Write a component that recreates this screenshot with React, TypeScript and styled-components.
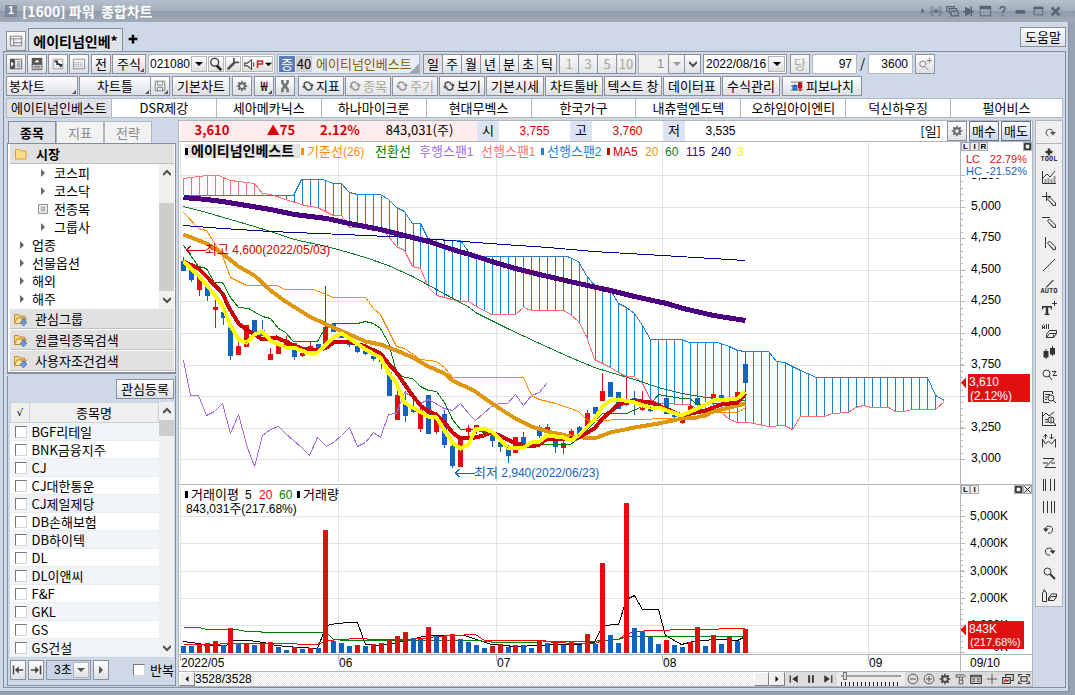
import React from "react";
import styled, { createGlobalStyle, css } from "styled-components";

const NUM_FONT = `12px/16px "Liberation Sans", "Noto Sans CJK KR", sans-serif`;

const GlobalStyle = createGlobalStyle`
  * { box-sizing: border-box; }
  body { margin: 0; background: #97a3b5; }
  body, button, input, select, table {
    font-family: "Noto Sans CJK KR", sans-serif;
    font-size: 13px;
    line-height: 18px;
    color: #000;
  }
  button, input, select { margin: 0; padding: 0; }
  svg { display: block; flex: none; }
  svg text { font: ${NUM_FONT}; }
  svg tspan { font-family: "Noto Sans CJK KR", sans-serif; font-size: 13px; }
`;

/* ---------- icons ---------- */

type IconProps = { d?: string; fill?: string; w?: number; color?: string; sw?: number; children?: React.ReactNode };

const Icon = ({ d, fill, w = 16, color = "#333", sw = 1, children }: IconProps) => (
  <svg width={w} height={w} viewBox="0 0 16 16" fill="none" stroke={color} strokeWidth={sw} aria-hidden="true">
    {d && <path d={d} />}
    {fill && <path d={fill} fill={color} stroke="none" />}
    {children}
  </svg>
);

const GEAR =
  "M7 1h2v2l1.500.6L12 2.200l1.800 1.800-1.400 1.500L13 7h2v2h-2l-.6 1.500 1.400 1.500-1.800 1.800-1.500-1.400L9 13v2H7v-2l-1.500-.6L4 13.800 2.200 12l1.400-1.500L3 9H1V7h2l.6-1.500L2.200 4 4 2.200l1.500 1.400L7 3zM8 5.500a2.500 2.500 0 1 0 0 5 2.500 2.500 0 0 0 0-5z";
const Gear = ({ color = "#666", w = 14 }: { color?: string; w?: number }) => (
  <svg width={w} height={w} viewBox="0 0 16 16" aria-hidden="true">
    <path d={GEAR} fill={color} fillRule="evenodd" />
  </svg>
);

const Refresh = ({ color }: { color: string }) => (
  <Icon w={12} color={color} sw={2} d="M3 9V7.500a4 4 0 0 1 8-1.500M13 7v1.500a4 4 0 0 1-8 1.500" fill="M0 8h6L3 12zM10 8h6L13 4z" />
);

const Arrow = ({ dir = "down", color = "#000", size = 8 }: { dir?: string; color?: string; size?: number }) => {
  const shapes: Record<string, string> = {
    down: "M0 2h8L4 6z",
    right: "M2 0v8l4-4z",
    left: "M6 0v8L2 4z",
  };
  return (
    <svg width={size} height={size} viewBox="0 0 8 8" aria-hidden="true">
      <path d={shapes[dir]} fill={color} />
    </svg>
  );
};

const Chevron = ({ up }: { up?: boolean }) => (
  <svg width="8" height="8" viewBox="0 0 8 8" fill="none" stroke="#505050" strokeWidth="2" aria-hidden="true">
    <path d={up ? "M0 6l4-4 4 4" : "M0 2l4 4 4-4"} />
  </svg>
);

const Folder = ({ open }: { open?: boolean }) => (
  <svg width="14" height="14" viewBox="0 0 14 14" aria-hidden="true">
    {open ? (
      <>
        <path d="M.5 11.500V2.500h4l1 1.500h5v2h-7z" fill="#fbd980" stroke="#c98f2e" />
        <path d="M.5 11.500l2.500-5.500h9.500l-2.500 5.500z" fill="#ffe7a3" stroke="#c98f2e" />
        <path d="M8 7h3v3h2l-3.500 4L6 10h2z" fill="#6b9be0" stroke="#3f6fb5" strokeWidth=".7" />
      </>
    ) : (
      <path d="M1.500 12V2.500h4l1 1.500H12V12z" fill="#ffdc86" stroke="#d9a23c" />
    )}
  </svg>
);

/* ---------- frame ---------- */

const Frame = styled.div`
  min-height: 100vh;
  background: #97a3b5;
  padding: 0 6px 4px 0;
  display: flex;
  flex-direction: column;
`;

const TitleBar = styled.header`
  height: 22px;
  margin-right: -6px;
  padding: 0 12px 0 5px;
  display: flex;
  align-items: center;
  gap: 5px;
  background: linear-gradient(#b6c1cd 0, #a0acba 11px, #8e9aab 11px, #a2aab7 22px);
`;

const WindowNumber = styled.span`
  width: 12px;
  height: 12px;
  background: #7d8898;
  color: #fff;
  font: bold 10px/12px "Liberation Sans", sans-serif;
  text-align: center;
`;

const Title = styled.h1`
  margin: 0;
  flex: 1;
  color: #fff;
  font-size: 14px;
  line-height: 20px;
  font-weight: 700;
  white-space: pre;
`;

const WindowTools = styled.div`
  display: flex;
  align-items: center;
  gap: 4px;
`;

const PlainButton = styled.button`
  border: 0;
  background: none;
  display: flex;
  align-items: center;
  justify-content: center;
`;

const Body = styled.main`
  flex: 1;
  background: #ced8e7;
  border-right: 1px solid #848fa0;
  border-bottom: 1px solid #848fa0;
  display: flex;
  flex-direction: column;
  padding: 0 2px 3px 3px;
`;

const TabStrip = styled.div`
  height: 29px;
  display: flex;
  align-items: flex-end;
  padding-left: 3px;
  gap: 2px;
`;

const DocTab = styled.button`
  height: 24px;
  width: 95px;
  margin-bottom: -1px;
  border: 1px solid #848f9e;
  border-bottom: 0;
  background: #e0e3e9;
  font-size: 14px;
  font-weight: 700;
  white-space: nowrap;
`;

const AddTab = styled(PlainButton)`
  width: 16px;
  height: 24px;
`;

const Spacer = styled.div`
  flex: 1;
`;

const HelpSlot = styled.div`
  align-self: flex-start;
  padding-top: 5px;
`;

const Panel = styled.div`
  flex: 1;
  border: 1px solid #848f9e;
  padding: 2px 2px 0 2px;
  display: flex;
  flex-direction: column;
  gap: 2px;
`;

/* ---------- toolbars ---------- */

const Bar = styled.div`
  display: flex;
  height: 20px;
  gap: 1px;
`;

const Gap = styled.span<{ $w?: number }>`
  width: ${(p) => p.$w ?? 0}px;
`;

const Btn = styled.button<{ $w: number; $left?: boolean; $corner?: boolean; $blue?: boolean; $on?: boolean }>`
  position: relative;
  width: ${(p) => p.$w}px;
  height: 20px;
  flex: none;
  border: 1px solid ${(p) => (p.$blue ? "#5f7396" : "#8b929c")};
  background: ${(p) =>
    p.$on ? "#e0e2e8" : p.$blue ? "linear-gradient(#fff, #c9d6ee)" : "linear-gradient(#fff, #dcdfe5)"};
  display: flex;
  align-items: center;
  justify-content: ${(p) => (p.$left ? "flex-start" : "center")};
  padding-left: ${(p) => (p.$left ? 2 : 0)}px;
  gap: 2px;
  line-height: 16px;
  white-space: nowrap;
  &:disabled {
    color: #a9a796;
    background: linear-gradient(#f8f8f8, #e2e4e8);
  }
  ${(p) =>
    p.$corner &&
    css`
      &::after {
        content: "";
        position: absolute;
        right: 1px;
        bottom: 1px;
        border: 2px solid transparent;
        border-right-color: #555;
        border-bottom-color: #555;
      }
    `}
`;

const Joined = styled.div`
  display: flex;
  margin-right: 1px;
  > * + * {
    margin-left: -1px;
  }
`;

const CodeBox = styled.div`
  width: 127px;
  display: flex;
  align-items: center;
  gap: 1px;
  padding: 0 1px;
  background: #fff;
  border: 1px solid #b4bac2;
`;

const CodeInput = styled.input`
  flex: 1;
  min-width: 0;
  border: 0;
  font: ${NUM_FONT};
  text-align: center;
  height: 16px;
`;

const MiniBtn = styled.button<{ $w?: number }>`
  width: ${(p) => p.$w ?? 16}px;
  height: 16px;
  flex: none;
  display: flex;
  align-items: center;
  justify-content: center;
  gap: 1px;
  border: 1px solid #b4b6ba;
  background: linear-gradient(#fff, #dedfe2);
`;

const NameBox = styled.div`
  width: 143px;
  display: flex;
  align-items: center;
  gap: 1px;
  padding-left: 1px;
  border: 1px solid #a9b2be;
  background: linear-gradient(135deg, transparent 50%, #9ea4ad 50%) right bottom / 9px 9px no-repeat, #e6edf6;
  color: #8a5a0c;
  white-space: nowrap;
`;

const Mark = styled.span<{ $bg: string; $color: string }>`
  width: 16px;
  height: 16px;
  line-height: 15px;
  flex: none;
  text-align: center;
  background: ${(p) => p.$bg};
  color: ${(p) => p.$color};
`;

const NameText = styled.span`
  padding-left: 3px;
`;

const NumInput = styled.input<{ $w: number; $muted?: boolean }>`
  width: ${(p) => p.$w}px;
  height: 20px;
  border: 1px solid #b4b8be;
  padding-right: 4px;
  font: ${NUM_FONT};
  text-align: right;
  background: ${(p) => (p.$muted ? "#efefef" : "#fff")};
  color: ${(p) => (p.$muted ? "#888" : "#000")};
`;

const SelectBox = styled.span<{ $w: number; $bg?: string; $pad?: number }>`
  width: ${(p) => p.$w}px;
  height: 20px;
  display: flex;
  align-items: center;
  border: 1px solid #9096a0;
  background: ${(p) => p.$bg ?? "#fff"};
  padding-right: 1px;
  select {
    flex: 1;
    min-width: 0;
    height: 16px;
    font: ${NUM_FONT};
    appearance: none;
    border: 0;
    background: none;
    padding-left: ${(p) => p.$pad ?? 2}px;
  }
`;

const Slash = styled.span`
  width: 9px;
  text-align: center;
`;

const StockTabs = styled.nav`
  height: 20px;
  display: grid;
  grid-template-columns: repeat(9, 105fr) 111fr;
  border: 1px solid #b3b9c2;
  background: #fff;
`;

const StockTab = styled.button<{ $on?: boolean }>`
  border: 0;
  border-right: 1px solid #b3b9c2;
  background: ${(p) => (p.$on ? "#e0e2e8" : "#fff")};
  line-height: 16px;
  white-space: nowrap;
  &:last-child {
    border-right: 0;
  }
`;

/* ---------- side panel ---------- */

const Content = styled.div`
  flex: 1;
  display: flex;
  gap: 2px;
`;

const Side = styled.aside`
  width: 170px;
  flex: none;
  display: flex;
  flex-direction: column;
  padding-top: 1px;
`;

const SideTabs = styled.div`
  display: flex;
  padding-left: 2px;
  height: 22px;
`;

const SideTab = styled.button<{ $on?: boolean }>`
  width: 48px;
  border: 1px solid ${(p) => (p.$on ? "#848f9e" : "#b3b9c2")};
  border-bottom: 0;
  background: ${(p) => (p.$on ? "#dee1e7" : "#f2f2f2")};
  color: ${(p) => (p.$on ? "#000" : "#888")};
  font-weight: ${(p) => (p.$on ? 700 : 400)};
`;

const TreeBox = styled.div`
  border: 2px solid #848f9e;
  border-width: 1px 1px 2px 1px;
  background: #fff;
  padding: 0 1px 0 2px;
  margin-left: 1px;
`;

const GroupHead = styled.button<{ $main?: boolean }>`
  width: 100%;
  height: 20px;
  margin-bottom: ${(p) => (p.$main ? 0 : 1)}px;
  border: 0;
  border-bottom: 1px solid #c0c0c0;
  background: #e1e1e1;
  display: flex;
  align-items: center;
  gap: ${(p) => (p.$main ? 8 : 7)}px;
  padding-left: 4px;
  line-height: 16px;
  font-weight: ${(p) => (p.$main ? 700 : 400)};
`;

const ScrollArea = styled.div`
  display: flex;
  background: #fff;
`;

const Tree = styled.ul`
  flex: 1;
  margin: 0;
  padding: 0;
  list-style: none;
`;

const Leaf = styled.li<{ $deep?: boolean }>`
  height: 18px;
  display: flex;
  align-items: center;
  gap: ${(p) => (p.$deep ? 6 : 5)}px;
  padding-left: ${(p) => (p.$deep ? 28 : 7)}px;
`;

const LeafIcon = styled.span`
  width: 10px;
  display: flex;
  justify-content: center;
`;

const ScrollBar = styled.div`
  width: 15px;
  flex: none;
  background: #f0f0f0;
  display: flex;
  flex-direction: column;
`;

const ScrollEnd = styled(PlainButton)`
  height: 18px;
`;

const Thumb = styled.div<{ $before: number; $h: number }>`
  margin-top: ${(p) => p.$before}px;
  height: ${(p) => p.$h}px;
  background: #cdcdcd;
`;

const ListBox = styled.div`
  flex: 1;
  margin: 2px 0 1px 1px;
  border: 1px solid #848f9e;
  border-top: 0;
  padding: 3px 1px 4px 2px;
  display: flex;
  flex-direction: column;
`;

const ListActions = styled.div`
  display: flex;
  justify-content: flex-end;
  height: 23px;
`;

const StockTable = styled.table`
  flex: 1;
  border-collapse: collapse;
  background: #fff;
  th {
    height: 20px;
    padding: 0;
    font-weight: 400;
    background: #efefef;
    border: 1px solid #d0d0d0;
    line-height: 16px;
  }
  th:first-child {
    font: 10px/16px "DejaVu Sans", sans-serif;
  }
  td {
    height: 18px;
    padding: 0 0 0 2px;
    line-height: 16px;
    border-bottom: 1px solid #e8ecf0;
  }
  tbody tr:nth-child(odd) {
    background: #f1f5fa;
  }
`;

const Check = styled.input.attrs({ type: "checkbox" })`
  appearance: none;
  display: block;
  width: 12px;
  height: 12px;
  margin-left: 2px;
  background: #fff;
  border: 1px solid #d6d6d6;
  border-top-color: #777;
  border-left-color: #777;
`;

const Player = styled.div`
  display: flex;
  align-items: center;
  gap: 2px;
  padding-top: 3px;
`;

const Repeat = styled.label`
  margin-left: 20px;
  display: flex;
  align-items: center;
  gap: 5px;
  white-space: nowrap;
`;

/* ---------- chart ---------- */

const ChartCol = styled.section`
  flex: 1;
  min-width: 0;
  border: 1px solid #b2b6bb;
  background: #fff;
  display: flex;
  flex-direction: column;
`;

const Quote = styled.div`
  height: 21px;
  border-bottom: 1px solid #b2b6bb;
  display: flex;
  align-items: center;
  padding-left: 1px;
  padding-right: 1px;
`;

const Cell = styled.span<{ $w: number; $bg?: string; $color?: string; $bold?: boolean; $num?: boolean }>`
  ${(p) => p.$num && css`font: ${NUM_FONT};`}
  width: ${(p) => p.$w}px;
  height: 20px;
  line-height: ${(p) => (p.$num ? 20 : 18)}px;
  flex: none;
  text-align: center;
  background: ${(p) => p.$bg ?? "none"};
  color: ${(p) => p.$color ?? "#000"};
  font-weight: ${(p) => (p.$bold ? 700 : 400)};
`;

const QuoteTools = styled.div`
  display: flex;
  align-items: center;
  gap: 2px;
`;

const Period = styled.span`
  padding-right: 4px;
`;

const PlotRow = styled.div`
  display: flex;
  border-bottom: 1px solid #b2b6bb;
`;

const PlotBox = styled.div`
  flex: 1;
  min-width: 0;
`;

const AxisBox = styled.div`
  width: 72px;
  flex: none;
  border-left: 1px solid #b2b6bb;
`;

const AxisHead = styled.div`
  display: flex;
  height: 10px;
`;

const TinyBtn = styled.button`
  width: 9px;
  height: 9px;
  border: 1px solid #a9adb3;
  background: #efefef;
  font: bold 8px/8px "Liberation Sans", sans-serif;
  display: flex;
  align-items: center;
  justify-content: center;
`;

const Dates = styled.div`
  height: 17px;
  border-bottom: 1px solid #b2b6bb;
  display: flex;
`;

const EndDate = styled.div`
  width: 72px;
  flex: none;
  border-left: 1px solid #b2b6bb;
  padding-left: 9px;
  font: ${NUM_FONT};
`;

const BottomBar = styled.div`
  flex: 1;
  display: flex;
  background: #dcdcdc;
`;

const Track = styled.div`
  flex: 1;
  font: ${NUM_FONT};
  line-height: 14px;
  background: repeating-conic-gradient(#fff 0 25%, #eaeaea 0 50%) 0 0 / 2px 2px;
`;

const Raised = styled.button<{ $w: number }>`
  width: ${(p) => p.$w}px;
  border: 1px solid #fff;
  border-right-color: #808080;
  border-bottom-color: #808080;
  background: #efefef;
  display: flex;
  align-items: center;
  justify-content: center;
`;

const Playback = styled.div`
  display: flex;
  justify-content: space-around;
  width: 52px;
`;

const Speed = styled.div`
  width: 68px;
  display: flex;
  flex-direction: column;
  justify-content: space-between;
  background: #ececec;
  padding: 0 4px;
  input {
    appearance: none;
    width: 100%;
    height: 8px;
    background: linear-gradient(#ececec 3px, #a0a0a0 3px, #a0a0a0 5px, #ececec 5px);
  }
  input::-webkit-slider-thumb {
    appearance: none;
    width: 4px;
    height: 8px;
    background: #ddd;
    border: 1px solid #777;
  }
`;

const Marks = styled.div`
  height: 4px;
  background: repeating-linear-gradient(90deg, #222 0 1px, transparent 1px 4px);
`;

const BottomTools = styled.div`
  width: 127px;
  display: flex;
  justify-content: space-around;
`;

const Tools = styled.aside`
  width: 28px;
  flex: none;
  align-self: flex-start;
  border: 1px solid #b2b6bb;
  background: #efefef;
`;

const Tool = styled(PlainButton)<{ $sep?: boolean }>`
  width: 100%;
  height: ${(p) => (p.$sep ? 23 : 22)}px;
  flex-direction: column;
  border-bottom: ${(p) => (p.$sep ? "1px solid #b2b6bb" : "0")};
`;

const ToolText = styled.span`
  font: bold 7px/7px "DejaVu Sans Mono", monospace;
  color: #333;
`;

/* ---------- chart data ---------- */

const RED = "#e01010";
const BLUE = "#1163c0";
const xAt = (i: number) => Math.round(183 + i * 7.915);

type Pt = [number, number];

/* index, wick top, body top, body bottom, wick bottom, rising */
const CANDLES: number[][] = [
  [0, 257, 261, 271, 271, 0], [1, 268, 270, 280, 282, 0], [2, 277, 277, 290, 296, 1], [3, 283, 285, 296, 301, 0],
  [4, 298, 307, 310, 328, 1], [5, 310, 312, 318, 325, 0], [6, 325, 327, 356, 360, 0], [7, 342, 346, 355, 355, 1],
  [8, 325, 325, 347, 347, 1], [9, 320, 320, 333, 333, 0], [10, 320, 330, 336, 336, 0], [11, 348, 354, 360, 360, 1],
  [12, 342, 346, 354, 354, 1], [13, 336, 340, 347, 347, 1], [14, 343, 343, 357, 360, 0], [15, 351, 353, 356, 357, 1],
  [16, 341, 346, 353, 353, 1], [17, 344, 344, 350, 350, 0], [18, 286, 327, 344, 344, 1], [19, 324, 324, 332, 332, 0],
  [20, 332, 334, 338, 338, 0], [21, 338, 340, 345, 347, 0], [22, 344, 346, 352, 353, 0], [23, 348, 350, 354, 355, 0],
  [24, 354, 356, 359, 361, 0], [25, 356, 359, 362, 369, 1], [26, 370, 372, 396, 396, 0], [27, 391, 395, 420, 420, 1],
  [28, 391, 404, 416, 422, 0], [29, 397, 409, 412, 413, 0], [30, 408, 410, 429, 432, 1], [31, 395, 395, 434, 434, 0],
  [32, 416, 418, 432, 434, 1], [33, 410, 414, 445, 448, 0], [34, 444, 446, 466, 468, 0], [35, 438, 438, 467, 467, 1],
  [36, 425, 428, 432, 436, 1], [37, 425, 425, 428, 434, 1], [38, 430, 431, 433, 434, 1], [39, 435, 436, 441, 447, 0],
  [40, 440, 442, 447, 452, 0], [41, 445, 447, 456, 463, 0], [42, 437, 437, 453, 453, 1], [43, 432, 437, 443, 443, 0],
  [45, 425, 427, 436, 438, 0], [46, 424, 427, 433, 433, 1], [47, 438, 440, 447, 453, 0], [48, 441, 443, 448, 454, 1],
  [49, 429, 431, 435, 436, 1], [50, 426, 427, 435, 435, 0], [51, 410, 413, 427, 427, 1], [52, 407, 407, 414, 416, 0],
  [53, 373, 391, 401, 401, 1], [54, 382, 382, 397, 397, 0], [55, 392, 392, 409, 409, 0], [56, 377, 402, 405, 406, 1],
  [57, 391, 398, 404, 415, 0], [58, 391, 408, 410, 411, 1], [59, 399, 408, 411, 412, 0], [60, 402, 403, 407, 408, 0],
  [61, 398, 398, 414, 414, 0], [62, 413, 415, 417, 418, 0], [63, 414, 417, 423, 424, 1], [64, 404, 406, 412, 413, 1],
  [65, 398, 398, 405, 405, 0], [67, 394, 394, 400, 400, 1], [68, 395, 395, 400, 400, 0], [69, 396, 397, 400, 400, 1],
  [70, 392, 392, 398, 398, 1], [71, 352, 364, 383, 392, 0],
];

const SPAN_2: Pt[] = [
  [183, 195], [293, 195], [301, 179], [322, 179], [333, 183], [341, 183], [349, 192], [357, 194], [380, 194], [388, 199],
  [396, 207], [404, 211], [412, 223], [420, 223], [428, 239], [460, 240], [468, 251], [476, 256], [567, 256], [578, 261],
  [586, 275], [594, 285], [602, 288], [610, 290], [618, 303], [626, 307], [634, 313], [642, 325], [650, 339], [681, 339],
  [689, 342], [717, 342], [729, 346], [737, 350], [745, 351], [768, 351], [776, 361], [784, 362], [800, 370], [816, 377],
  [927, 377], [935, 395], [944, 400],
];

const SPAN_1: Pt[] = [
  [183, 178], [206, 175], [218, 175], [230, 180], [254, 183], [262, 193], [270, 194], [285, 199], [301, 204], [309, 206],
  [317, 207], [333, 215], [341, 215], [349, 227], [380, 228], [388, 236], [396, 246], [404, 250], [412, 266], [420, 268],
  [428, 287], [436, 295], [444, 297], [460, 301], [468, 301], [476, 306], [491, 314], [515, 314], [523, 307], [531, 310],
  [563, 310], [570, 314], [578, 321], [586, 336], [594, 359], [610, 367], [618, 372], [626, 376], [634, 376], [642, 383],
  [650, 399], [658, 403], [689, 404], [705, 413], [721, 412], [729, 419], [737, 422], [748, 422], [768, 426], [784, 425],
  [792, 429], [800, 416], [824, 416], [832, 413], [848, 412], [855, 407], [863, 405], [871, 407], [888, 407], [895, 411],
  [904, 411], [911, 409], [935, 409], [944, 401],
];

const LINES: { color: string; w: number; pts: string }[] = [
  { color: "#a06ee0", w: 1, pts: "183,360 190,395 198,395 206,415 214,411 222,403 230,433 238,414 246,444 254,466 262,435 270,429 278,426 285,433 301,447 309,455 317,437 326,446 333,442 341,435 349,427 357,446 365,442 373,432 380,437 388,414 396,413 404,392 408,394 420,403 428,399 444,408 452,410 460,403 468,413 475,420 491,406 499,403 507,403 515,394 523,405 531,395 539,392 546,383" },
  { color: "#ff8c00", w: 1, pts: "183,212 198,228 206,230 222,255 230,277 246,285 276,285 285,289 313,289 333,297 365,297 373,308 380,314 396,346 404,348 420,359 436,361 444,367 452,377 523,377 531,395 539,399 555,403 570,408 578,411 587,420 634,419 705,417 713,412 737,412 745,407" },
  { color: "#008000", w: 1, pts: "183,245 198,266 206,268 214,282 222,282 230,297 238,307 248,308 262,316 270,318 278,328 285,332 293,341 317,341 326,325 333,323 357,323 365,321 373,323 380,328 388,342 396,372 404,377 412,378 420,386 428,390 436,391 444,402 452,419 460,429 475,429 483,432 499,437 515,442 531,444 570,444 578,438 602,413 626,413 642,406 650,404 658,394 681,398 689,398 697,404 737,402 745,395" },
  { color: "#117c30", w: 1, pts: "183,206 206,212 230,219 254,226 270,231 294,239 326,246 341,250 365,257 388,265 412,276 436,289 469,307 475,312 507,328 539,343 570,357 594,367 610,372 634,379 658,387 681,393 705,397 745,400" },
  { color: "#00008b", w: 1, pts: "183,225 222,228 270,231 343,234 409,237 476,242 503,244 548,247 593,251 662,255 745,260" },
  { color: "#4b0082", w: 5, pts: "183,197 206,199 222,201 246,205 270,209 294,214 326,218 349,223 380,229 404,235 428,241 452,249 476,256 491,261 515,268 539,274 578,283 610,290 634,296 666,303 683,308 713,315 745,320" },
  { color: "#de960d", w: 4, pts: "183,234 206,243 222,253 238,266 254,275 270,290 285,301 309,316 326,324 349,334 365,341 380,344 396,350 412,357 428,366 444,373 452,380 475,391 483,397 499,408 515,418 531,426 547,431 570,436 594,438 610,432 634,427 658,423 681,418 697,417 713,411 729,407 745,403" },
  { color: "#cc0000", w: 4, pts: "183,261 198,268 206,276 222,293 229,308 238,323 246,329 262,339 276,337 289,343 301,348 317,350 326,347 333,342 349,341 365,346 380,353 388,363 396,372 412,395 420,405 428,411 436,414 444,422 452,432 460,438 475,437 483,435 491,432 499,435 515,443 531,446 539,444 547,438 570,438 578,437 594,428 602,418 618,404 634,400 650,402 665,408 681,415 705,410 721,404 737,402 745,393" },
  { color: "#ffff00", w: 4, pts: "183,261 198,275 209,288 222,305 230,325 238,339 246,342 254,334 262,331 270,340 285,347 293,347 309,353 317,352 333,337 341,333 349,338 365,349 380,357 388,372 396,383 404,402 412,407 428,416 436,417 444,430 452,442 460,448 468,444 475,429 483,428 491,431 499,438 507,447 523,447 531,442 539,441 547,435 563,437 570,440 578,435 586,427 594,419 602,406 610,400 618,399 634,402 650,407 658,407 681,415 697,408 713,400 737,398 745,391" },
];

const VOLUMES =
  "7b 7b 9r 10r 12r 8b 25r 10b 9r 8b 9r 11r 6b 3b 6r 4b 5r 5b 123r 12b 10b 7b 8r 7b 9r 10r 14r 17r 21r 15b 14b 26r 17b 17r 19r 14b 11b 8b 5b 7r 9r 6b 8r 8b 5b 12r 10b 10r 8b 11r 8b 19r 9b 90r 18b 10b 150r 25b 22b 16b 9b 13r 8b 6b 11r 26r 7b 18r 9b 16r 12b 24r".split(" ");

const VOLUME_LINES = [
  { color: "#000", pts: "183,641 198,643 206,645 226,645 233,640 249,640 263,642 276,645 286,646 299,647 317,648 326,625 336,623 349,622 357,622 365,644 379,645 393,643 409,639 428,635 452,635 464,635 476,639 491,644 515,646 539,645 559,644 578,644 594,642 602,625 618,624 626,599 634,595 642,609 658,609 665,635 681,644 697,640 720,639 737,640 745,636" },
  { color: "#f00", pts: "183,644 209,644 230,643 276,643 317,644 326,640 356,638 376,639 406,639 423,638 436,636 452,635 475,634 484,640 543,640 553,642 578,643 594,643 602,640 618,639 626,633 647,630 693,629 745,628" },
  { color: "#008000", pts: "183,627 199,627 206,629 236,629 246,631 276,632 326,632 333,639 346,640 476,640 496,642 589,641 618,639 626,636 745,636" },
];

const yOf = (pts: Pt[], x: number) => {
  for (let i = 1; i < pts.length; i++) {
    const [x0, y0] = pts[i - 1];
    const [x1, y1] = pts[i];
    if (x <= x1) return Math.round(y0 + ((y1 - y0) * (x - x0)) / (x1 - x0));
  }
  return pts[pts.length - 1][1];
};

const join = (pts: Pt[]) => pts.map((p) => p.join(",")).join(" ");
const MONTHS = [338, 496, 662, 868];
const PRICE_GRID = [175, 207, 238, 270, 301, 333, 365, 396, 428, 459];
const VOLUME_GRID = [516, 543, 571, 598, 625, 652];

const LEGEND: { x: number; t: string; c: string; n?: string; mark?: number }[] = [
  { x: 307, t: "기준선", n: "(26)", c: "#ff8c00", mark: 301 },
  { x: 375, t: "전환선", c: "#008000" },
  { x: 419, t: "후행스팬", n: "1", c: "#a06ee0" },
  { x: 481, t: "선행스팬", n: "1", c: "#ff7070" },
  { x: 547, t: "선행스팬", n: "2", c: "#1a80d8", mark: 541 },
  { x: 613, t: "", n: "MA", c: "#cc0000", mark: 607 },
  { x: 631, t: "", n: "5", c: "#cc0000" },
  { x: 645, t: "", n: "20", c: "#de960d" },
  { x: 665, t: "", n: "60", c: "#117c30" },
  { x: 686, t: "", n: "115", c: "#4b0082" },
  { x: 711, t: "", n: "240", c: "#00008b" },
  { x: 737, t: "", n: "3", c: "#ffff00" },
];

const SmallText = styled.text`
  && {
    font-size: 11px;
  }
`;

const NameLabel = styled.text`
  && {
    font: bold 14px "Noto Sans CJK KR", sans-serif;
  }
`;

const PricePlot = () => (
  <svg width="100%" height="342" role="img" aria-label="에이티넘인베스트 일봉">
    <g transform="translate(-179 -142)" fill="none">
      <g fill="#e2e2e2">
        {PRICE_GRID.map((y) => <rect key={y} x="180" y={y} width="100%" height="1" />)}
        {[180, ...MONTHS].map((x) => <rect key={x} x={x} y="143" width="1" height="339" />)}
      </g>
      <g shapeRendering="crispEdges">
        {Array.from({ length: 96 }, (_, i) => {
          const x = xAt(i);
          const a = yOf(SPAN_1, x);
          const b = yOf(SPAN_2, x);
          return <rect key={i} x={x} y={Math.min(a, b)} width="1" height={Math.abs(a - b)} fill={b < a ? "#1a80d8" : "#ff7070"} />;
        })}
        <g transform="translate(.5 .5)">
          <polyline points={join(SPAN_1)} stroke="#ff7070" />
          <polyline points={join(SPAN_2)} stroke="#1a80d8" />
        </g>
        {CANDLES.map(([i, t, bt, bb, l, up]) => (
          <g key={i} fill={up ? RED : BLUE}>
            <rect x={xAt(i)} y={t} width="1" height={l - t} />
            <rect x={xAt(i) - 2} y={bt} width="5" height={bb - bt} />
          </g>
        ))}
        <g transform="translate(.5 .5)">
          {LINES.map((l) => (
            <polyline key={l.color + l.w} points={l.pts} stroke={l.color} strokeWidth={l.w} strokeLinejoin="round" />
          ))}
          <path d="M186 249.500h19M190 245.500l-4 4 4 4" stroke="#cc0000" />
          <path d="M455 472.500h19M459 468.500l-4 4 4 4" stroke="#1163c0" />
        </g>
      </g>
      <rect x="185" y="144" width="115" height="14" fill="#e4e4e4" />
      <rect x="185" y="148" width="3" height="7" fill="#000" />
      <NameLabel x="191" y="156" fill="#000">에이티넘인베스트</NameLabel>
      {LEGEND.map((l) => (
        <g key={l.x} fill={l.c}>
          {l.mark && <rect x={l.mark} y="148" width="3" height="7" />}
          <text x={l.x} y="156">{l.t && <tspan>{l.t}</tspan>}{l.n}</text>
        </g>
      ))}
      <text x="205" y="254" fill="#cc0000"><tspan>최고</tspan> 4,600(2022/05/03)</text>
      <text x="474" y="477" fill="#1163c0"><tspan>최저</tspan> 2,940(2022/06/23)</text>
    </g>
  </svg>
);

const PriceAxis = () => (
  <svg width="71" height="332" aria-hidden="true">
    <g transform="translate(-961 -152)">
      <g fill="#b2b6bb">
        {PRICE_GRID.map((y) => <rect key={y} x="961" y={y} width="4" height="1" />)}
        {Array.from({ length: 46 }, (_, i) => <rect key={i} x="961" y={Math.round(175 + i * 6.31)} width="2" height="1" />)}
      </g>
      <text x="971" y="179">5,250</text>
      {["5,000", "4,750", "4,500", "4,250", "4,000", "3,750", "", "3,250", "3,000"].map((t, i) => (
        <text key={i} x="971" y={PRICE_GRID[i + 1] + 3}>{t}</text>
      ))}
      <rect x="966" y="154" width="64" height="24" fill="#fff" />
      <SmallText x="966" y="163" fill={RED}>LC</SmallText>
      <SmallText x="1027" y="163" fill={RED} textAnchor="end">22.79%</SmallText>
      <SmallText x="966" y="175" fill={BLUE}>HC</SmallText>
      <SmallText x="1027" y="175" fill={BLUE} textAnchor="end">-21.52%</SmallText>
      <path d="M961 382.500l5-5v11z" fill={RED} />
      <rect x="968" y="374" width="62" height="28" fill={RED} />
      <text x="969" y="386" fill="#fff">3,610</text>
      <text x="970" y="400" fill="#fff">(2.12%)</text>
    </g>
  </svg>
);

const VolumePlot = () => (
  <svg width="100%" height="169" role="img" aria-label="거래량">
    <g transform="translate(-179 -485)" fill="none" shapeRendering="crispEdges">
      <g fill="#e2e2e2">
        {VOLUME_GRID.map((y) => <rect key={y} x="180" y={y} width="100%" height="1" />)}
        {[180, ...MONTHS].map((x) => <rect key={x} x={x} y="486" width="1" height="167" />)}
      </g>
      <g transform="translate(.5 .5)">
        {VOLUME_LINES.map((l) => <polyline key={l.color} points={l.pts} stroke={l.color} />)}
      </g>
      {VOLUMES.map((v, i) => {
        const h = parseInt(v, 10);
        return <rect key={i} x={xAt(i) - 2} y={653 - h} width="5" height={h} fill={v.endsWith("r") ? RED : BLUE} />;
      })}
      <rect x="185" y="491" width="3" height="7" fill="#000" />
      <text x="191" y="499" fill="#000"><tspan>거래이평</tspan></text>
      <text x="245" y="499" fill="#000">5</text>
      <text x="259" y="499" fill="#f00">20</text>
      <text x="279" y="499" fill="#008000">60</text>
      <rect x="297" y="491" width="3" height="7" fill="#000" />
      <text x="303" y="499" fill="#000"><tspan>거래량</tspan></text>
      <text x="186" y="513" fill="#000">843,031<tspan>주</tspan>(217.68%)</text>
    </g>
  </svg>
);

const VolumeAxis = () => (
  <svg width="71" height="159" aria-hidden="true">
    <g transform="translate(-961 -495)">
      <g fill="#b2b6bb">
        {VOLUME_GRID.map((y) => <rect key={y} x="961" y={y} width="4" height="1" />)}
        {Array.from({ length: 27 }, (_, i) => <rect key={i} x="961" y={Math.round(505 + i * 5.45)} width="2" height="1" />)}
      </g>
      {["5,000K", "4,000K", "3,000K", "2,000K", "1,000K", "0K"].map((t, i) => (
        <text key={t} x="1008" y={VOLUME_GRID[i] + (i === 5 ? -1 : 4)} textAnchor="end">{t}</text>
      ))}
      <path d="M960 629.500l6-5v11z" fill={RED} />
      <rect x="968" y="621" width="56" height="28" fill={RED} />
      <text x="969" y="633" fill="#fff">843K</text>
      <SmallText x="970" y="646" fill="#fff">(217.68%)</SmallText>
    </g>
  </svg>
);

const DateAxis = () => (
  <svg width="100%" height="16" aria-hidden="true">
    <g transform="translate(-179 -655)">
      {[180, ...MONTHS].map((x, i) => (
        <g key={x}>
          <rect x={x} y="655" width="1" height="6" fill="#b2b6bb" />
          <text x={x + 1} y="667">{["2022/05", "06", "07", "08", "09"][i]}</text>
        </g>
      ))}
    </g>
  </svg>
);

/* ---------- right-hand drawing tools ---------- */

const PENCIL = "M6.500 8l2-2 6 6v2.500h-2.500zM8.500 10.500l4 3.500";
const TOOLS: { name: string; icon: React.ReactNode }[] = [
  { name: "회전", icon: <Icon color="#555" d="M7.500 12A3.500 3.500 0 1 1 12 8.500" fill="M9 8h6l-3 3.500z" /> },
  { name: "도구", icon: <><Icon w={8} d="M8 1v14M1 8h14" sw={5} /><ToolText>TOOL</ToolText></> },
  { name: "차트", icon: <Icon d="M1.500 2v12.500H15M2 9l4-4 3 3 5-6"><path d="M4.500 14v-4M7.500 14v-5M10.500 14v-4M13.500 14V7" stroke="#999" strokeWidth="2" /></Icon> },
  { name: "십자선", icon: <Icon d={"M1 5.500h9M5.500 1v9" + PENCIL} /> },
  { name: "수평선", icon: <Icon d={"M1 4.500h8" + PENCIL} sw={1} /> },
  { name: "수직선", icon: <Icon d={"M4.500 2v11" + PENCIL} /> },
  { name: "추세선", icon: <Icon d="M2 14L14 2" /> },
  { name: "자동", icon: <><Icon w={9} d="M2 15L15 2" sw={2} /><ToolText>AUTO</ToolText></> },
  { name: "문자", icon: <Icon d="M13.500 0v5M11 2.500h5" fill="M1 5h10v3.500h-1L9.500 6.500H7.200V12.500l1.300.5v1h-5v-1l1.300-.5V6.500H2.500L2 8.500H1z" /> },
  { name: "모두 지우기", icon: <Icon d="M1.500 6V2.500l1-1 1 1V6M1.500 4.500h2M5.500 1v5M7.500 1v5M5.500 14.500l3-4h7l-3 4zM5.500 14.500v-3l3-4h7v3M12.500 14.500v-3" /> },
  { name: "봉", icon: <Icon d="M5 4v10M11.500 1v10" fill="M2.500 6h5v6.500h-5zM9 3h5v6.500H9z" /> },
  { name: "찾기", icon: <Icon d="M9 6.500a3.500 3.500 0 1 1-7 0 3.500 3.500 0 0 1 7 0zM8 9l3 4M11 4.500h4l-3 4h4" /> },
  { name: "문서 찾기", icon: <Icon d="M8 13.500H2.500v-11h9V5M4 5.500h5M4 8h3M4 10.500h2M13 9a3 3 0 1 1-6 0 3 3 0 0 1 6 0zM12 11l3 3" /> },
  { name: "차트 찾기", icon: <Icon d="M1.500 1v13.500H15M2 5l3-3 3 3 5-4M4 8.500h3M4 11h3M13 9a3 3 0 1 1-6 0 3 3 0 0 1 6 0zM12 11l3 3M10 7v4" /> },
  { name: "주기", icon: <Icon d="M1.500 14.500V6l3 5 3-3 3 3 4-5v8.500M4.500 1v5M2.500 3.500l2-2 2 2M10.500 1v5M8.500 4l2 2 2-2" /> },
  { name: "파동", icon: <Icon d="M2 3.500h11L4 12.500h11M2 8h5M10 8h4" /> },
  { name: "분할선", icon: <Icon d="M2.500 2v12M4.500 2v12M9.500 2v12M13.500 2v12" /> },
  { name: "등간격선", icon: <Icon d="M2.500 2v12M6.500 2v12M10.500 2v12M13.500 2v12" /> },
  { name: "실행 취소", icon: <Icon d="M7 12a3.500 3.500 0 1 0-2.500-4" fill="M2 7.500h6L4.500 11z" /> },
  { name: "다시 실행", icon: <Icon d="M9 12a3.500 3.500 0 1 1 2.500-4" fill="M8.500 7.500h6L12 11z" /> },
  { name: "확대", icon: <Icon d="M10 6.500a3.500 3.500 0 1 1-7 0 3.500 3.500 0 0 1 7 0z"><path d="M9 9l5 5" strokeWidth="2" /></Icon> },
  { name: "지우개", icon: <Icon d="M1.500 14.500V6l1.500-2h1l1.500 2v8.500zM3 4V2M7.500 13.500l2.500-4h5.500l-2.500 4zM7.500 13.500v-2.500l3-4h5v3" /> },
];

const STOCKS = ["에이티넘인베스트", "DSR제강", "세아메카닉스", "하나마이크론", "현대무벡스", "한국가구", "내츄럴엔도텍", "오하임아이엔티", "덕신하우징", "펄어비스"];
const WATCH = ["BGF리테일", "BNK금융지주", "CJ", "CJ대한통운", "CJ제일제당", "DB손해보험", "DB하이텍", "DL", "DL이앤씨", "F&F", "GKL", "GS", "GS건설"];
const DIM = "#5a6472";

export default function App() {
  return (
    <Frame>
      <GlobalStyle />
      <TitleBar>
        <WindowNumber>1</WindowNumber>
        <Title>[1600] 파워  종합차트</Title>
        <WindowTools>
          <PlainButton aria-label="펼치기"><Arrow dir="right" color={DIM} size={6} /></PlainButton>
          <PlainButton aria-label="연결"><Icon w={12} color={DIM} sw={1} d="M5 2H3L1.500 4v8L3 14h2M11 2h2l1.500 2v8L13 14h-2M6 4L4 6v4l2 2M10 4l2 2v4l-2 2" fill="M6 6h4v4H6z" /></PlainButton>
          <PlainButton aria-label="창 겹치기"><Icon w={13} color={DIM} sw={1.500} d="M1 9V2h9v2M4 11V4.500h9V7M6.500 7.500h8.500v6H6.500z" /></PlainButton>
          <PlainButton aria-label="고정"><Icon w={11} color={DIM} sw={2} d="M0 8h4M12 1v14M12 8h4" fill="M3 1l8 4v6l-8 4z" /></PlainButton>
          <PlainButton aria-label="창 모양"><Icon w={14} color={DIM} d="M2.500 3.500h12v10h-12z" fill="M2 2h13v4H2z" /></PlainButton>
          <PlainButton aria-label="물음"><Icon w={13} color={DIM} sw={2} d="M5 5c0-4 6-4 6-.5C11 7 8 7 8 10M8 12v2" /></PlainButton>
          <PlainButton aria-label="최소화"><Icon w={14} color={DIM} sw={4} d="M3 9h11" /></PlainButton>
          <PlainButton aria-label="최대화"><Icon w={14} color={DIM} d="M3.500 4.500h10v8h-10z" fill="M3 3h11v3H3z" /></PlainButton>
          <PlainButton aria-label="닫기"><Icon w={14} color={DIM} sw={3} d="M3 4l9 9M12 4l-9 9" /></PlainButton>
        </WindowTools>
      </TitleBar>

      <Body>
        <TabStrip>
          <Btn $w={20} aria-label="화면 구성"><Icon w={14} color="#777" d="M1.500 2.500h13v11h-13zM1.500 5.500h13M5.500 5.500v8M5.500 10h9" /></Btn>
          <DocTab>에이티넘인베*</DocTab>
          <AddTab aria-label="탭 추가"><Icon w={10} color="#000" sw={4} d="M8 1v14M1 8h14" /></AddTab>
          <Spacer />
          <HelpSlot><Btn $w={46}>도움말</Btn></HelpSlot>
        </TabStrip>

        <Panel>
          <Bar>
            <Btn $w={20} aria-label="왼쪽 패널"><Icon w={14} color="#555" d="M7.500 2.500h7v11h-7M9 5.500h4M9 8h4M9 10.500h4" fill="M1 2h6v12H1z"><path d="M2.500 5v6l3-3z" fill="#fff" stroke="none" /></Icon></Btn>
            <Btn $w={20} aria-label="위쪽 패널"><Icon w={14} color="#555" d="M2.500 8v6.500h11V8M4 10.500h8M4 12.500h8" fill="M2 1h12v8H2z"><path d="M5 6h6L8 3z" fill="#fff" stroke="none" /></Icon></Btn>
            <Btn $w={20} aria-label="차트 형식"><Icon w={14} color="#999" d="M2.500 2.500h11v11h-11z"><path d="M4 5h3v3h3" stroke="#333" strokeWidth="2" /><path d="M8 8h5v2l-2 2z" fill="#333" stroke="none" /></Icon></Btn>
            <Btn $w={20} aria-label="격자"><Icon w={14} color="#888" d="M1.500 2.500h13v11h-13z"><path d="M3 6.500h10M3 8.500h10M3 10.500h10" strokeDasharray="1 1" /></Icon></Btn>
            <Gap />
            <Btn $w={20}>전</Btn>
            <Btn $w={34} $corner>주식</Btn>
            <Gap />
            <CodeBox>
              <CodeInput aria-label="종목코드" defaultValue="021080" />
              <MiniBtn aria-label="목록"><Arrow /></MiniBtn>
              <MiniBtn aria-label="종목 검색"><Icon w={14} sw={1.500} d="M11 6a4.500 4.500 0 1 1-9 0 4.500 4.500 0 0 1 9 0z"><path d="M9 10l5 5" strokeWidth="3" stroke="#222" /></Icon></MiniBtn>
              <MiniBtn aria-label="설정"><Icon w={14} color="#555" sw={3} d="M2 14l8-8"><path d="M9 1v5h6" strokeWidth="2" /></Icon></MiniBtn>
              <MiniBtn $w={31} aria-label="알림">
                <Icon w={11} color="#444" sw={1.500} d="M1 6h4l6-5v14l-6-5H1zM14 5v6" />
                <Icon w={8} color="#c22" sw={3} d="M3 1v15M3 2h10v6H3" />
                <Arrow size={7} />
              </MiniBtn>
            </CodeBox>
            <Gap />
            <NameBox>
              <Mark $bg="#5b7db5" $color="#fff">증</Mark>
              <Mark $bg="#cfd1d4" $color="#000">40</Mark>
              <NameText>에이티넘인베스트</NameText>
            </NameBox>
            <Gap $w={1} />
            <Joined>
              {["일", "주", "월", "년", "분", "초", "틱"].map((t, i) => <Btn key={t} $w={20} $on={i === 0}>{t}</Btn>)}
            </Joined>
            <Joined>
              {["1", "3", "5", "10"].map((t) => <Btn key={t} $w={20} disabled>{t}</Btn>)}
            </Joined>
            <Joined>
              <NumInput $w={31} $muted aria-label="주기 값" defaultValue="1" />
              <Btn $w={17} disabled aria-label="주기 감소"><Arrow color="#999" /></Btn>
              <Btn $w={17} aria-label="주기 선택"><Chevron /></Btn>
            </Joined>
            <SelectBox $w={84}>
              <select aria-label="기준일"><option>2022/08/16</option></select>
              <MiniBtn $w={17} aria-label="달력"><Arrow /></MiniBtn>
            </SelectBox>
            <Gap $w={1} />
            <Btn $w={20} disabled>당</Btn>
            <Gap />
            <NumInput $w={45} aria-label="표시 개수" defaultValue="97" />
            <Slash>/</Slash>
            <NumInput $w={45} aria-label="전체 개수" defaultValue="3600" />
            <Gap />
            <Btn $w={20} aria-label="확대"><Icon w={14} color="#777" d="M9 8a3.500 3.500 0 1 1-7 0 3.500 3.500 0 0 1 7 0zM8 11l4 4M13 1v6M10 4h6" /></Btn>
          </Bar>

          <Bar>
            <Btn $w={72} $left $corner>봉차트</Btn>
            <Joined>
              <Btn $w={72} $corner>차트틀</Btn>
              <Btn $w={20} $corner aria-label="저장"><Icon w={14} color="#777" d="M2.500 2.500h11v11h-11zM5 2.500V7h6V2.500M5 13.500v-4h6v4" /></Btn>
            </Joined>
            <Btn $w={58}>기본차트</Btn>
            <Gap />
            <Btn $w={20} aria-label="환경 설정"><Gear w={12} /></Btn>
            <Gap />
            <Btn $w={20} $corner>₩</Btn>
            <Btn $w={20} aria-label="도구 설정"><Icon w={14} color="#777" sw={3} d="M5 1v3l2 3v2l-2 3v3M11 1v3L9 7v2l2 3v3" /></Btn>
            <Gap $w={1} />
            <Btn $w={46}><Refresh color="#555" />지표</Btn>
            <Btn $w={46} disabled><Refresh color="#999" />종목</Btn>
            <Btn $w={46} disabled><Refresh color="#999" />주기</Btn>
            <Btn $w={46}><Refresh color="#555" />보기</Btn>
            {["기본시세", "차트툴바", "텍스트 창", "데이터표", "수식관리"].map((t) => <Btn key={t} $w={58}>{t}</Btn>)}
            <Gap />
            <Btn $w={80}>
              <Icon w={14} color="#666" d="M1 3.500h14M1 8h14M1 12.500h14"><path d="M5.500 6v7M3.500 8h4v4h-4z" stroke="#1163c0" strokeWidth="1.500" /><path d="M11.500 3v11M10 5h3v5h-3z" stroke="#c00" strokeWidth="1.500" /></Icon>
              피보나치
            </Btn>
          </Bar>

          <StockTabs aria-label="최근 종목">
            {STOCKS.map((s, i) => <StockTab key={s} $on={i === 0}>{s}</StockTab>)}
          </StockTabs>

          <Content>
            <Side>
              <SideTabs>
                <SideTab $on>종목</SideTab>
                <SideTab>지표</SideTab>
                <SideTab>전략</SideTab>
              </SideTabs>
              <TreeBox>
                <GroupHead $main><Folder />시장</GroupHead>
                <ScrollArea>
                  <Tree>
                    {["코스피", "코스닥", "전종목", "그룹사"].map((t) => (
                      <Leaf key={t} $deep>
                        <LeafIcon>
                          {t === "전종목" ? <Icon w={10} color="#777" sw={1.500} d="M1 1h14v14H1zM4 5h8M4 8h8M4 11h8" /> : <Arrow dir="right" color="#666" />}
                        </LeafIcon>
                        {t}
                      </Leaf>
                    ))}
                    {["업종", "선물옵션", "해외", "해주"].map((t) => (
                      <Leaf key={t}><LeafIcon><Arrow dir="right" color="#666" /></LeafIcon>{t}</Leaf>
                    ))}
                  </Tree>
                  <ScrollBar>
                    <ScrollEnd aria-label="위로"><Chevron up /></ScrollEnd>
                    <Thumb $before={21} $h={88} />
                    <ScrollEnd aria-label="아래로"><Chevron /></ScrollEnd>
                  </ScrollBar>
                </ScrollArea>
                {["관심그룹", "원클릭종목검색", "사용자조건검색"].map((t) => <GroupHead key={t}><Folder open />{t}</GroupHead>)}
              </TreeBox>

              <ListBox>
                <ListActions><Btn $w={58}>관심등록</Btn></ListActions>
                <ScrollArea>
                  <StockTable>
                    <colgroup><col width="19" /><col /></colgroup>
                    <thead><tr><th>√</th><th>종목명</th></tr></thead>
                    <tbody>
                      {WATCH.map((t, i) => (
                        <tr key={t}>
                          <td><Check id={`w${i}`} /></td>
                          <td><label htmlFor={`w${i}`}>{t}</label></td>
                        </tr>
                      ))}
                    </tbody>
                  </StockTable>
                  <ScrollBar>
                    <ScrollEnd aria-label="위로"><Chevron up /></ScrollEnd>
                    <Thumb $before={0} $h={16} />
                    <Spacer />
                    <ScrollEnd aria-label="아래로"><Chevron /></ScrollEnd>
                  </ScrollBar>
                </ScrollArea>
                <Player>
                  <Btn $w={16} aria-label="처음"><Icon w={12} color="#444" sw={2} d="M2 2v12M6 8h9" fill="M4 8l5-5v10z" /></Btn>
                  <Btn $w={16} aria-label="다음"><Icon w={12} color="#444" sw={2} d="M14 2v12M1 8h9" fill="M12 8L7 3v10z" /></Btn>
                  <SelectBox $w={46} $bg="#c9d5e6" $pad={7}>
                    <select aria-label="간격"><option>3초</option></select>
                    <MiniBtn aria-label="간격 목록"><Arrow color="#555" /></MiniBtn>
                  </SelectBox>
                  <Btn $w={16} aria-label="재생"><Arrow dir="right" color="#555" /></Btn>
                  <Repeat><Check />반복</Repeat>
                </Player>
              </ListBox>
            </Side>

            <ChartCol>
              <Quote>
                <Cell $w={64} $bg="#ffecec" $color="#d80000" $bold>3,610</Cell>
                <Cell $w={74} $bg="#ffecec" $color="#d80000" $bold>▲75</Cell>
                <Cell $w={44} $bg="#ffecec" $color="#d80000" $bold>2.12%</Cell>
                <Cell $w={115} $bg="#ffecec">843,031(주)</Cell>
                <Cell $w={22} $bg="#dce4f3">시</Cell>
                <Cell $w={71} $color="#d80000" $num>3,755</Cell>
                <Cell $w={22} $bg="#dce4f3">고</Cell>
                <Cell $w={71} $color="#d80000" $num>3,760</Cell>
                <Cell $w={22} $bg="#dce4f3">저</Cell>
                <Cell $w={71} $num>3,535</Cell>
                <Spacer />
                <QuoteTools>
                  <Period>[일]</Period>
                  <Btn $w={20} aria-label="차트 설정"><Gear w={12} /></Btn>
                  <Btn $w={30} $blue>매수</Btn>
                  <Btn $w={30} $blue>매도</Btn>
                </QuoteTools>
              </Quote>
              <PlotRow>
                <PlotBox><PricePlot /></PlotBox>
                <AxisBox>
                  <AxisHead>
                    <TinyBtn>L</TinyBtn><TinyBtn>I</TinyBtn><TinyBtn>R</TinyBtn>
                    <Spacer />
                    <TinyBtn aria-label="크게"><Icon w={7} color="#000" sw={3} d="M2 2h12v12H2z" /></TinyBtn>
                  </AxisHead>
                  <PriceAxis />
                </AxisBox>
              </PlotRow>
              <PlotRow>
                <PlotBox><VolumePlot /></PlotBox>
                <AxisBox>
                  <AxisHead>
                    <TinyBtn>L</TinyBtn><TinyBtn>I</TinyBtn>
                    <Spacer />
                    <TinyBtn aria-label="크게"><Icon w={7} color="#000" sw={3} d="M2 2h12v12H2z" /></TinyBtn>
                    <TinyBtn aria-label="닫기"><Icon w={7} color="#000" sw={2} d="M1 1l14 14M15 1L1 15" /></TinyBtn>
                  </AxisHead>
                  <VolumeAxis />
                </AxisBox>
              </PlotRow>
              <Dates>
                <PlotBox><DateAxis /></PlotBox>
                <EndDate>09/10</EndDate>
              </Dates>
              <BottomBar>
                <Raised $w={16} aria-label="왼쪽으로"><Arrow dir="left" size={6} /></Raised>
                <Track>3528/3528</Track>
                <Raised $w={15} aria-label="위치" />
                <Raised $w={16} aria-label="오른쪽으로"><Arrow dir="right" size={6} /></Raised>
                <Playback>
                  <PlainButton aria-label="처음으로"><Icon w={10} sw={2} d="M2 2v12" fill="M14 2v12L5 8z" /></PlainButton>
                  <PlainButton aria-label="일시 정지"><Icon w={10} sw={3} d="M5 2v12M11 2v12" /></PlainButton>
                  <PlainButton aria-label="끝으로"><Icon w={10} sw={2} d="M14 2v12" fill="M2 2v12l9-6z" /></PlainButton>
                </Playback>
                <Speed>
                  <input type="range" aria-label="속도" defaultValue="3" />
                  <Marks />
                </Speed>
                <BottomTools>
                  <PlainButton aria-label="축소"><Icon w={12} d="M14.500 8a6.500 6.500 0 1 1-13 0 6.500 6.500 0 0 1 13 0zM4 8h8" /></PlainButton>
                  <PlainButton aria-label="확대"><Icon w={12} d="M14.500 8a6.500 6.500 0 1 1-13 0 6.500 6.500 0 0 1 13 0zM4 8h8M8 4v8" /></PlainButton>
                  <PlainButton aria-label="설정"><Gear w={12} color="#444" /></PlainButton>
                  <PlainButton aria-label="도구"><Icon w={12} d="M1.500 2.500h10l3 3M1.500 2.500v3h10M6 6v3M10 6v3M5.500 9.500h5v5h-5z" /></PlainButton>
                  <PlainButton aria-label="표"><Icon w={12} sw={1.500} d="M1 3h14v11H1zM1 5h14M3 8h4M3 11h4M9 8h4M9 11h4" /></PlainButton>
                  <PlainButton aria-label="십자선"><Icon w={12} d="M8 1v14M1 8h14" /></PlainButton>
                  <PlainButton aria-label="복사"><Icon w={12} sw={1.500} d="M5 5V2h10v8h-3M1 6h10v8H1z"><path d="M3 12l2-3 2 2 2-2" stroke="#c00" /></Icon></PlainButton>
                  <PlainButton aria-label="전체 화면"><Icon w={12} sw={1.500} d="M1 5V2h4M11 2h4v3M15 11v3h-4M5 14H1v-3M4 5h8v6H4z" /></PlainButton>
                </BottomTools>
              </BottomBar>
            </ChartCol>

            <Tools>
              {TOOLS.map((t, i) => <Tool key={t.name} $sep={i === 0} aria-label={t.name}>{t.icon}</Tool>)}
            </Tools>
          </Content>
        </Panel>
      </Body>
    </Frame>
  );
}
